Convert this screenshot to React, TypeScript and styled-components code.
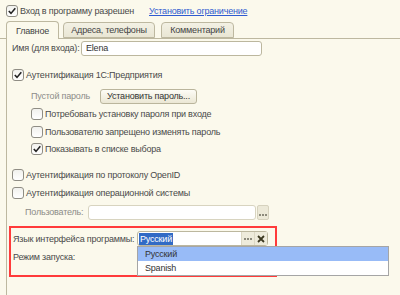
import styled, { createGlobalStyle } from 'styled-components';

const Global = createGlobalStyle`
  html, body {
    margin: 0;
    padding: 0;
    background: #fbf9ec;
  }
`;

const Screen = styled.div`
  width: 400px;
  height: 295px;
  overflow: hidden;
  background: #fbf9ec;
  font-family: 'Liberation Sans', Arial, sans-serif;
  font-size: 9px;
  letter-spacing: -0.2px;
  color: #4a4a4a;
  display: flex;
  flex-direction: column;
`;

const TopRow = styled.div`
  height: 21px;
  display: flex;
  align-items: center;
  padding-left: 6px;
`;

const Link = styled.a`
  margin-left: 15px;
  color: #2f5bd0;
  text-decoration: underline;
  cursor: pointer;
`;

const TabBar = styled.div`
  display: flex;
  align-items: flex-end;
  height: 17px;
  padding-left: 6px;
  gap: 4px;
  border-bottom: 1px solid #bdb8a0;
`;

const Tab = styled.div<{ $active?: boolean; $w: number }>`
  box-sizing: border-box;
  width: ${(p) => p.$w}px;
  height: ${(p) => (p.$active ? 18 : 16)}px;
  margin-bottom: ${(p) => (p.$active ? -1 : 0)}px;
  margin-right: ${(p) => (p.$active ? 0 : 2)}px;
  display: flex;
  align-items: center;
  justify-content: center;
  border: 1px solid #bdb8a0;
  border-bottom: ${(p) => (p.$active ? 'none' : '1px solid #bdb8a0')};
  border-radius: 4px 4px 0 0;
  background: ${(p) =>
    p.$active ? '#fbf9ec' : 'linear-gradient(#f3f1e4, #e9e6d4)'};
  color: #444;
`;

const Panel = styled.div`
  flex: 1;
  margin-left: 6px;
  border-left: 1px solid #bdb8a0;
  display: flex;
  flex-direction: column;
  padding-left: 5px;
`;

const Row = styled.div<{ $top: number; $h?: number; $indent?: number }>`
  display: flex;
  align-items: center;
  height: ${(p) => p.$h ?? 16}px;
  margin-top: ${(p) => p.$top}px;
  padding-left: ${(p) => p.$indent ?? 0}px;
  white-space: nowrap;
`;

const Label = styled.span<{ $muted?: boolean; $w?: number }>`
  color: ${(p) => (p.$muted ? '#8c8c88' : '#4a4a4a')};
  ${(p) => (p.$w ? `width: ${p.$w}px;` : '')}
  flex-shrink: 0;
`;

const Input = styled.div<{ $w: number; $disabled?: boolean }>`
  box-sizing: border-box;
  width: ${(p) => p.$w}px;
  height: 15px;
  border: 1px solid ${(p) => (p.$disabled ? '#d8d4c0' : '#bcb79e')};
  border-radius: 3px;
  background: #fff;
  display: flex;
  align-items: center;
  padding-left: 4px;
  color: #333;
`;

const Button = styled.div`
  box-sizing: border-box;
  height: 15px;
  width: 97px;
  margin-left: 17px;
  border: 1px solid #bab59c;
  border-radius: 3px;
  background: linear-gradient(#fdfcf6, #ebe7d4);
  display: flex;
  align-items: center;
  justify-content: center;
  color: #333;
`;

const BoxWrap = styled.span`
  box-sizing: border-box;
  width: 12px;
  height: 12px;
  margin-right: 2px;
  border: 1px solid #8f8d84;
  border-radius: 3px;
  background: linear-gradient(#f1f1ed, #fff);
  display: inline-flex;
  align-items: center;
  justify-content: center;
  flex-shrink: 0;
`;

const Check = ({ on }: { on?: boolean }) => (
  <BoxWrap>
    {on && (
      <svg width="10" height="10" viewBox="0 0 10 10">
        <path d="M1.8 5 L4 7.4 L8.3 2.3" fill="none" stroke="#222" strokeWidth="1.6" />
      </svg>
    )}
  </BoxWrap>
);

const Choice = styled.div`
  box-sizing: border-box;
  width: 12px;
  height: 15px;
  margin-left: 1px;
  border: 1px solid #d6d2be;
  border-radius: 2px;
  background: #ece9d8;
  display: flex;
  align-items: flex-end;
  justify-content: center;
  padding-bottom: 3px;
`;

const Dots = () => (
  <svg width="8" height="2" viewBox="0 0 8 2">
    <rect x="0" y="0" width="2" height="2" fill="#8c8a7c" />
    <rect x="3" y="0" width="2" height="2" fill="#8c8a7c" />
    <rect x="6" y="0" width="2" height="2" fill="#8c8a7c" />
  </svg>
);

const RedBox = styled.div`
  box-sizing: border-box;
  margin-top: 6px;
  margin-left: -3px;
  width: 268px;
  height: 51px;
  border: 2px solid #ff3b3b;
  padding-left: 2px;
  display: flex;
  flex-direction: column;
`;

const Combo = styled.div`
  position: relative;
  box-sizing: border-box;
  width: 131px;
  height: 15px;
  margin-left: 3px;
  display: flex;
  border: 1px solid #bcb79e;
  border-radius: 3px;
  background: #fff;
`;

const ComboText = styled.div`
  flex: 1;
  display: flex;
  align-items: center;
  padding-left: 1px;
`;

const Selected = styled.span`
  background: #316ac5;
  color: #fff;
  padding: 0 1px;
  line-height: 12px;
`;

const ComboBtn = styled.div`
  width: 12px;
  display: flex;
  align-items: center;
  justify-content: center;
  background: #eeebdb;
  border-left: 1px solid #dcd8c4;
`;

const List = styled.div`
  position: absolute;
  top: 14px;
  left: -1px;
  width: 252px;
  height: 30px;
  box-sizing: border-box;
  border: 1px solid #a5a5a5;
  background: #fff;
  display: flex;
  flex-direction: column;
  z-index: 2;
`;

const Item = styled.div<{ $hot?: boolean }>`
  height: 14px;
  display: flex;
  align-items: center;
  padding-left: 7px;
  background: ${(p) => (p.$hot ? '#98bbf7' : '#fff')};
  color: #333;
`;

const Cursor = styled.svg`
  position: absolute;
  left: 110px;
  top: 14px;
`;

export default function App() {
  return (
    <Screen>
      <Global />
      <TopRow>
        <Check on />
        <Label>Вход в программу разрешен</Label>
        <Link>Установить ограничение</Link>
      </TopRow>
      <TabBar>
        <Tab $active $w={53}>Главное</Tab>
        <Tab $w={92}>Адреса, телефоны</Tab>
        <Tab $w={73}>Комментарий</Tab>
      </TabBar>
      <Panel>
        <Row $top={1}>
          <Label $w={69}>Имя (для входа):</Label>
          <Input $w={181}>Elena</Input>
        </Row>
        <Row $top={11}>
          <Check on />
          <Label>Аутентификация 1С:Предприятия</Label>
        </Row>
        <Row $top={5} $indent={19}>
          <Label $muted $w={52}>Пустой пароль</Label>
          <Button>Установить пароль...</Button>
        </Row>
        <Row $top={2} $indent={19}>
          <Check />
          <Label>Потребовать установку пароля при входе</Label>
        </Row>
        <Row $top={2} $indent={19}>
          <Check />
          <Label>Пользователю запрещено изменять пароль</Label>
        </Row>
        <Row $top={1} $indent={19}>
          <Check on />
          <Label>Показывать в списке выбора</Label>
        </Row>
        <Row $top={10}>
          <Check />
          <Label>Аутентификация по протоколу OpenID</Label>
        </Row>
        <Row $top={2}>
          <Check />
          <Label>Аутентификация операционной системы</Label>
        </Row>
        <Row $top={3} $indent={13}>
          <Label $muted $w={63}>Пользователь:</Label>
          <Input $w={168} $disabled />
          <Choice><Dots /></Choice>
        </Row>
        <RedBox>
          <Row $top={3} $h={15}>
            <Label $w={121}>Язык интерфейса программы:</Label>
            <Combo>
              <ComboText><Selected>Русский</Selected></ComboText>
              <ComboBtn><Dots /></ComboBtn>
              <ComboBtn>
                <svg width="8" height="8" viewBox="0 0 8 8">
                  <path d="M1 1 L7 7 M7 1 L1 7" stroke="#3b3820" strokeWidth="1.8" />
                </svg>
              </ComboBtn>
              <List>
                <Item $hot>Русский</Item>
                <Item>Spanish</Item>
              </List>
              <Cursor width="14" height="20" viewBox="0 0 14 20">
                <path
                  d="M1 1 L1 15 L4.5 11.5 L7 17.5 L9 16.6 L6.6 10.8 L11.4 10.8 Z"
                  fill="#fff"
                  stroke="#555"
                  strokeWidth="1"
                />
              </Cursor>
            </Combo>
          </Row>
          <Row $top={3} $h={16}>
            <Label>Режим запуска:</Label>
          </Row>
        </RedBox>
      </Panel>
    </Screen>
  );
}
